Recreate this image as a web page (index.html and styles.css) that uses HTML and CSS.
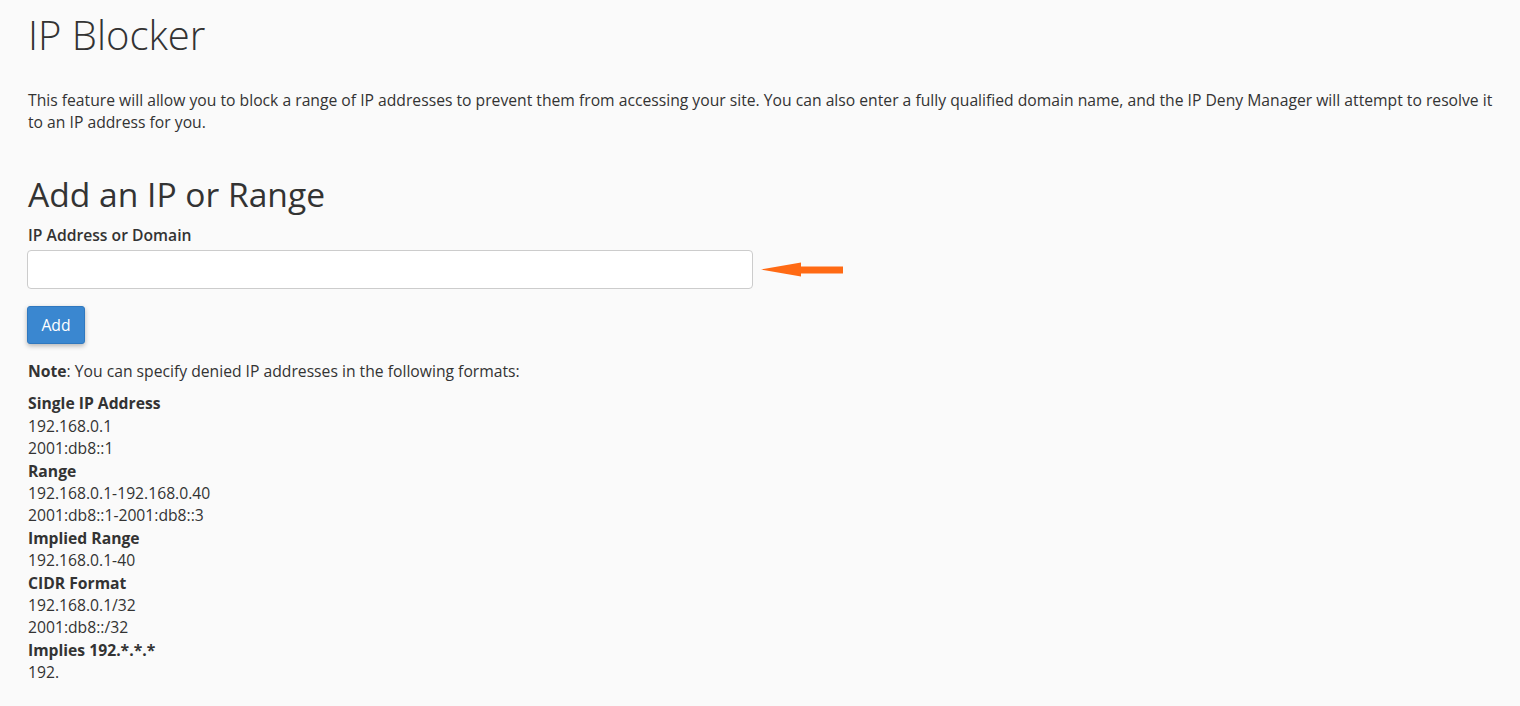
FILE: index.html
```html
<!DOCTYPE html>
<html lang="en">
<head>
<meta charset="utf-8">
<title>IP Blocker</title>
<link rel="stylesheet" href="styles.css">
</head>
<body>
<main class="page">
  <h1 class="page-title">IP Blocker</h1>
  <p class="intro">This feature will allow you to block a range of IP addresses to prevent them from accessing your site. You can also enter a fully qualified domain name, and the IP Deny Manager will attempt to resolve it to an IP address for you.</p>

  <section class="add-section">
    <h2 class="section-title">Add an IP or Range</h2>
    <label class="field-label" for="ip">IP Address or Domain</label>
    <div class="field-row">
      <input class="text-input" id="ip" type="text">
      <svg class="arrow" width="84" height="18" viewBox="0 0 84 18" aria-hidden="true">
        <polygon points="0,8.5 40,1.5 40,5.5 82,5.5 82,12.5 40,12.5 40,15.5" fill="#ff6a14"/>
      </svg>
    </div>
    <button class="btn-primary" type="button">Add</button>
  </section>

  <p class="note"><strong>Note</strong>: You can specify denied IP addresses in the following formats:</p>

  <dl class="formats">
    <dt>Single IP Address</dt>
    <dd>192.168.0.1</dd>
    <dd>2001:db8::1</dd>
    <dt>Range</dt>
    <dd>192.168.0.1-192.168.0.40</dd>
    <dd>2001:db8::1-2001:db8::3</dd>
    <dt>Implied Range</dt>
    <dd>192.168.0.1-40</dd>
    <dt>CIDR Format</dt>
    <dd>192.168.0.1/32</dd>
    <dd>2001:db8::/32</dd>
    <dt>Implies 192.*.*.*</dt>
    <dd>192.</dd>
  </dl>
</main>
</body>
</html>
```

FILE: styles.css
```css
html, body {
  margin: 0;
  padding: 0;
  background: #fafafa;
}
body {
  font-family: "Open Sans", "Liberation Sans", sans-serif;
  font-size: 15.7px;
  line-height: 22.4px;
  color: #333333;
}
.page {
  padding: 0 22px 0 28px;
}
.page-title {
  font-size: 40px;
  font-weight: 300;
  line-height: 44px;
  margin: 13px 0 0 0;
}
.intro {
  margin: 32px 0 0 0;
  line-height: 22px;
}
.add-section {
  margin-top: 42px;
}
.section-title {
  font-size: 33.6px;
  font-weight: 400;
  line-height: 38px;
  margin: 0;
}
.field-label {
  display: block;
  font-weight: 600;
  margin-top: 11px;
  line-height: 22px;
}
.field-row {
  display: flex;
  align-items: center;
  gap: 8px;
  margin-top: 4px;
  margin-left: -1px;
}
.text-input {
  box-sizing: border-box;
  width: 726px;
  height: 39px;
  border: 1px solid #cccccc;
  border-radius: 4px;
  background: #ffffff;
  margin: 0;
}
.arrow {
  display: block;
}
.btn-primary {
  display: block;
  margin: 17px 0 0 -1px;
  width: 58px;
  height: 38px;
  background: #3a87d0;
  border: 1px solid #2f78bf;
  border-radius: 3px;
  color: #ffffff;
  font-family: inherit;
  font-size: 15.7px;
  box-shadow: 0 2px 5px rgba(0,0,0,0.28);
  padding: 0;
}
.note {
  margin: 16px 0 0 0;
}
.note strong {
  font-weight: 700;
}
.formats {
  margin: 10px 0 0 0;
  line-height: 22.4px;
}
.formats dt {
  font-weight: 700;
}
.formats dd {
  margin: 0;
}
```
